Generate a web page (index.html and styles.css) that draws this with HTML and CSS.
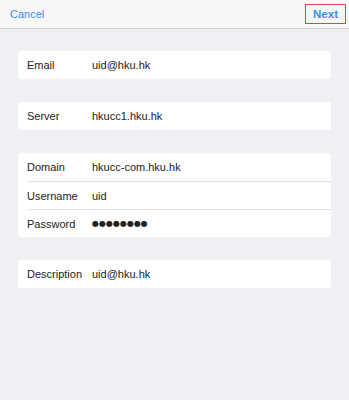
FILE: index.html
```html
<!DOCTYPE html>
<html lang="en">

<head>
  <meta charset="UTF-8">
  <meta name="viewport" content="width=device-width, initial-scale=1.0">
  <title>Account</title>
  <link rel="stylesheet" href="styles.css">
</head>

<body>
  <div class="navbar">
    <a class="nav-btn" href="#">Cancel</a>
    <a class="nav-btn nav-next" href="#">Next</a>
  </div>

  <div class="form">
    <div class="group">
      <div class="row"><span class="label">Email</span><span class="value">uid@hku.hk</span></div>
    </div>

    <div class="group">
      <div class="row"><span class="label">Server</span><span class="value">hkucc1.hku.hk</span></div>
    </div>

    <div class="group">
      <div class="row"><span class="label">Domain</span><span class="value">hkucc-com.hku.hk</span></div>
      <div class="row"><span class="label">Username</span><span class="value">uid</span></div>
      <div class="row"><span class="label">Password</span><span class="value dots">&#9679;&#9679;&#9679;&#9679;&#9679;&#9679;&#9679;&#9679;</span></div>
    </div>

    <div class="group">
      <div class="row"><span class="label">Description</span><span class="value">uid@hku.hk</span></div>
    </div>
  </div>
</body>

</html>
```

FILE: styles.css
```css
:root {
  --tint: #3a8cf0;
  --bg: #efeff4;
}

* {
  padding: 0;
  margin: 0;
  box-sizing: border-box;
}

body {
  background: var(--bg);
  font-family: "Liberation Sans", Arial, sans-serif;
  color: #222;
  height: 400px;
}

.navbar {
  height: 29px;
  background: #f7f7f8;
  border-bottom: 1px solid #cfcfd2;
  display: flex;
  justify-content: space-between;
  align-items: center;
  padding: 0 3px 0 10px;
}

.nav-btn {
  text-decoration: none;
  color: var(--tint);
  font-size: 11px;
}

.nav-next {
  font-weight: bold;
  font-size: 11.5px;
  padding: 3px 7px;
  border: 1.5px solid #e0434c;
  margin-top: -1px;
}

.form {
  padding: 22px 18px 0 18px;
}

.group {
  background: #fff;
  border-radius: 3px;
}

.group+.group {
  margin-top: 23px;
}

.row {
  height: 28px;
  display: flex;
  align-items: center;
  margin-left: 9px;
  font-size: 11px;
}

.row+.row {
  border-top: 1px solid #e2e2e6;
}

.label {
  width: 65px;
}

.value {
  color: #222;
}

.dots {
  font-size: 8px;
  letter-spacing: 0;
  font-family: "DejaVu Sans", sans-serif;
}
```
